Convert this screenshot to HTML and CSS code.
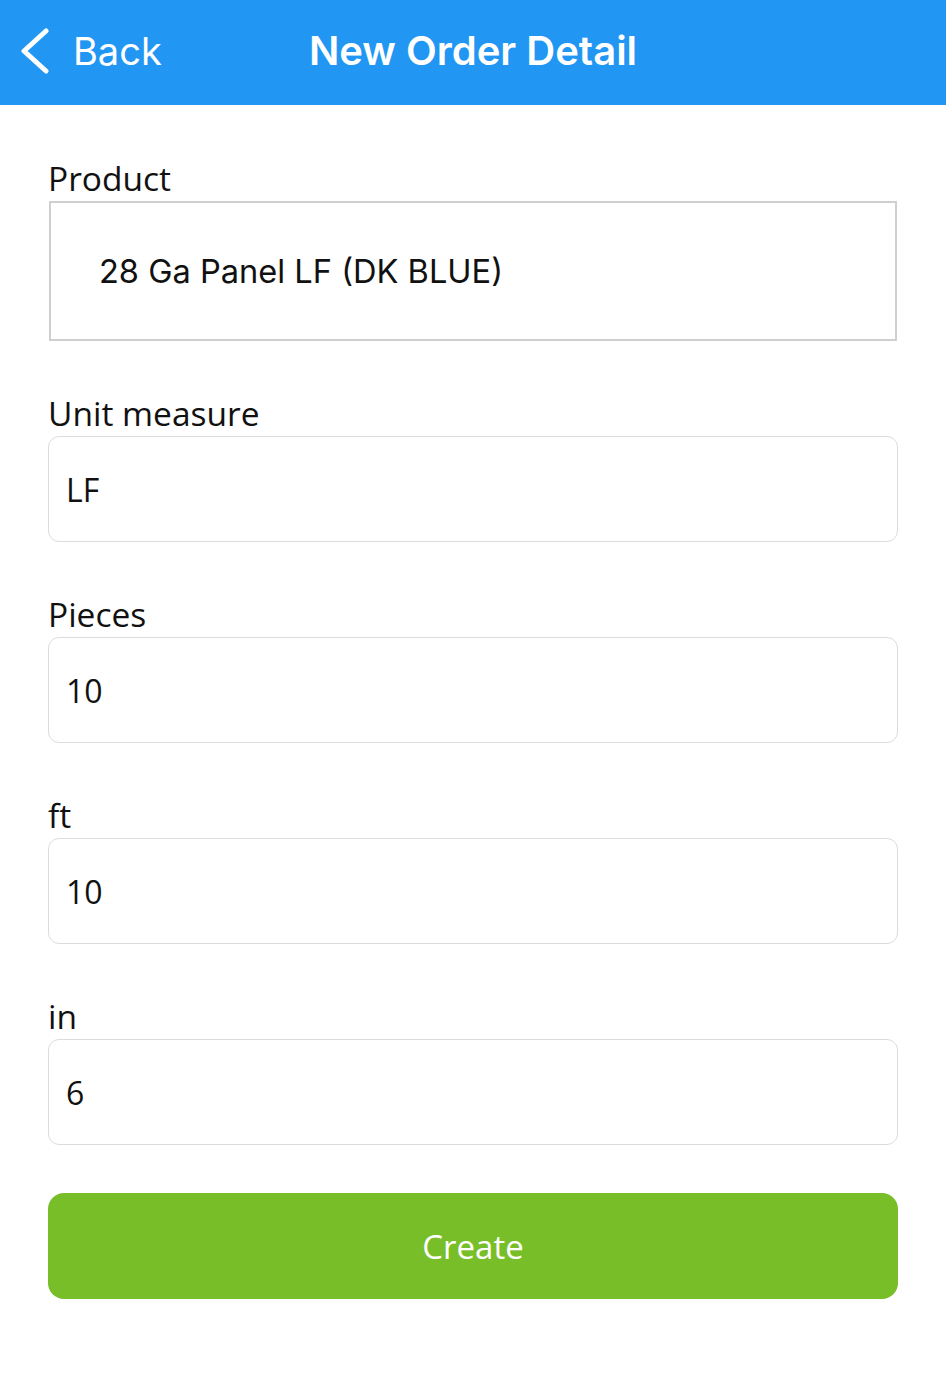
FILE: index.html
```html
<!DOCTYPE html>
<html lang="en">
<head>
    <meta charset="UTF-8">
    <meta name="viewport" content="width=device-width, initial-scale=1.0">
    <title>New Order Detail</title>
    <link rel="stylesheet" href="styles.css">
</head>
<body>
    <header class="nav-bar">
        <a class="back-link" href="#">
            <svg class="back-icon" width="32" height="46" viewBox="0 0 32 46">
                <path d="M27 3 L5 23 L27 43" fill="none" stroke="#fff" stroke-width="5" stroke-linecap="round" stroke-linejoin="round"/>
            </svg>
            <span>Back</span>
        </a>
        <h1 class="nav-title">New Order Detail</h1>
        <div></div>
    </header>

    <main class="form">
        <div class="field">
            <label class="field-label">Product</label>
            <div class="product-box">28 Ga Panel LF (DK BLUE)</div>
        </div>

        <div class="field">
            <label class="field-label" for="unit">Unit measure</label>
            <input class="field-input" id="unit" type="text" value="LF">
        </div>

        <div class="field">
            <label class="field-label" for="pieces">Pieces</label>
            <input class="field-input" id="pieces" type="text" value="10">
        </div>

        <div class="field">
            <label class="field-label" for="ft">ft</label>
            <input class="field-input" id="ft" type="text" value="10">
        </div>

        <div class="field">
            <label class="field-label" for="in">in</label>
            <input class="field-input" id="in" type="text" value="6">
        </div>

        <button class="create-btn" type="button">Create</button>
    </main>
</body>
</html>
```

FILE: styles.css
```css
/* Reset */
* {
    margin: 0;
    padding: 0;
    box-sizing: border-box;
}

body {
    font-family: 'Open Sans', sans-serif;
    background: #fff;
    color: #111;
    width: 946px;
}

/* Navigation bar */
.nav-bar {
    height: 105px;
    background-color: #2196f3;
    display: grid;
    grid-template-columns: 1fr auto 1fr;
    align-items: center;
    color: #fff;
}

.back-link {
    display: flex;
    align-items: center;
    gap: 22px;
    padding-left: 19px;
    color: #fff;
    text-decoration: none;
    font-family: 'Inter', sans-serif;
    font-size: 38px;
    margin-top: -4px;
}

.nav-title {
    font-family: 'Inter', sans-serif;
    font-size: 40px;
    font-weight: 600;
    margin-top: -4px;
}

/* Form */
.form {
    padding: 53px 48px 0;
}

.field {
    margin-bottom: 52px;
}

.field-label {
    display: block;
    font-size: 33.5px;
    line-height: 40px;
    margin-bottom: 3px;
    color: #111;
}

.product-box {
    margin: 3px 1px 0;
    height: 140px;
    border: 2px solid #cfcfcf;
    display: flex;
    align-items: center;
    padding-left: 48px;
    font-family: 'Inter', sans-serif;
    font-size: 32.6px;
    color: #111;
}

.field-input {
    display: block;
    width: 100%;
    height: 106px;
    border: 1px solid #dcdcdc;
    border-radius: 11px;
    padding: 0 17px;
    font-family: 'Open Sans', sans-serif;
    font-size: 32px;
    color: #111;
    background: #fff;
}

.create-btn {
    display: block;
    width: 100%;
    height: 106px;
    margin-top: -4px;
    background-color: #78be28;
    border: none;
    border-radius: 16px;
    color: #fff;
    font-family: 'Open Sans', sans-serif;
    font-size: 33px;
    cursor: pointer;
}
```
